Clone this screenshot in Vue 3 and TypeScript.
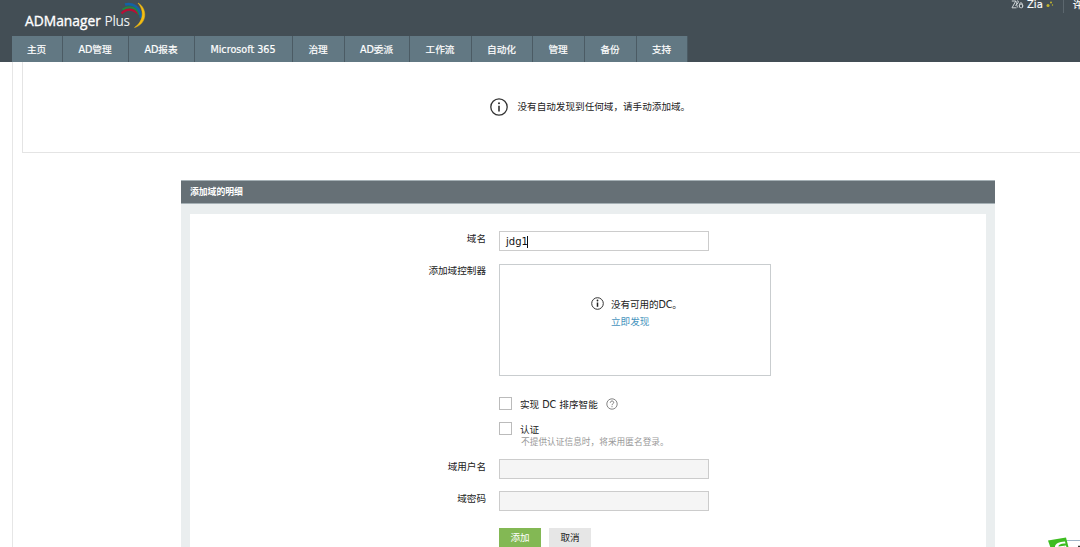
<script setup lang="ts">
interface NavItem {
  label: string
  width: number
}

const navItems: NavItem[] = [
  { label: '主页', width: 51 },
  { label: 'AD管理', width: 66 },
  { label: 'AD报表', width: 66 },
  { label: 'Microsoft 365', width: 98 },
  { label: '治理', width: 52 },
  { label: 'AD委派', width: 65 },
  { label: '工作流', width: 62 },
  { label: '自动化', width: 61 },
  { label: '管理', width: 52 },
  { label: '备份', width: 52 },
  { label: '支持', width: 51 },
]
</script>

<template>
  <div class="page">
    <header class="header">
      <div class="brand">
        <span class="brand-name">ADManager</span>
        <span class="brand-plus">Plus</span>
        <svg class="brand-arcs" width="28" height="28" viewBox="0 0 28 28" fill="none">
          <path d="M2.500 12.500Q10 4.500 19 12.500" stroke="#b80f36" stroke-width="2.200" />
          <path d="M3.500 8.500C11 4 18 6.500 20.500 14" stroke="#23863f" stroke-width="2" />
          <path d="M6 3.600C14 1.500 21.500 6.500 22 17" stroke="#1462a5" stroke-width="2.600" />
          <path d="M19 2C28.500 7 28.500 23 15.500 26.500C24 21 26 10 19 2Z" fill="#f4bd12" stroke="#f4bd12" stroke-width=".5" />
        </svg>
      </div>
      <div class="tools">
        <svg class="zia-icon" width="13" height="10" viewBox="0 0 13 10" fill="none" stroke="#cfd5d8" stroke-width="1">
          <path d="M.8 1h4L1 7.800h4.500M4.300 5.500C7 4 8 1.500 7 .8S4.500 3.800 6.800 7.500M8.500 7.500C8 5 9 2.500 10 2.500s2 3 1.500 5M8.300 5.500c0 3 3.500 3 3.500.5S9 4 8.300 5.500" />
        </svg>
        <span class="zia">Zia</span>
        <svg class="spark" width="8" height="8" viewBox="0 0 8 8" fill="#c3b52d">
          <circle cx="2" cy="4.500" r="1.500" /><circle cx="5" cy="1.500" r="1" /><circle cx="6.500" cy="4" r=".7" />
        </svg>
        <span class="tool-divider"></span>
        <span class="license">许</span>
      </div>
      <nav class="nav">
        <a v-for="item in navItems" :key="item.label" class="nav-item" :style="{ width: item.width + 'px' }">{{ item.label }}</a>
      </nav>
    </header>

    <main class="main">
      <section class="notice">
        <svg class="notice-icon" width="18" height="18" viewBox="0 0 18 18">
          <circle cx="9" cy="9" r="8.200" fill="none" stroke="#333" stroke-width="1.300" />
          <path d="M9 7.800v5.700" stroke="#222" stroke-width="1.500" /><circle cx="9" cy="5.200" r=".95" fill="#222" />
        </svg>
        <span>没有自动发现到任何域，请手动添加域。</span>
      </section>

      <section class="panel">
        <h2 class="panel-title">添加域的明细</h2>
        <div class="panel-body">
          <form class="form" @submit.prevent>
            <div class="row row-name">
              <label class="label">域名</label>
              <div class="field"><span class="typed">jdg1</span><span class="caret"></span></div>
            </div>
            <div class="row row-dc">
              <label class="label">添加域控制器</label>
              <div class="dc-box">
                <svg class="dc-icon" width="13" height="13" viewBox="0 0 13 13">
                  <circle cx="6.500" cy="6.500" r="5.800" fill="none" stroke="#333" stroke-width="1" />
                  <path d="M6.500 5.500v4.300" stroke="#222" stroke-width="1.500" /><circle cx="6.500" cy="3.500" r=".9" fill="#222" />
                </svg>
                <div class="dc-text">
                  <div class="dc-empty">没有可用的DC。</div>
                  <a class="link">立即发现</a>
                </div>
              </div>
            </div>
            <div class="check-row check-sort">
              <span class="checkbox"></span>
              <span class="check-label">实现 DC 排序智能</span>
              <svg class="help" width="12" height="12" viewBox="0 0 12 12" fill="none" stroke="#777">
                <circle cx="6" cy="6" r="5.200" stroke-width=".9" />
                <path d="M4.300 4.700C4.300 2.500 7.700 2.500 7.700 4.500C7.700 5.800 6 5.800 6 7.200M6 8.200v1" stroke-width="1" />
              </svg>
            </div>
            <div class="check-row check-auth">
              <span class="checkbox"></span>
              <div class="check-label">
                <div>认证</div>
                <div class="hint">不提供认证信息时，将采用匿名登录。</div>
              </div>
            </div>
            <div class="row row-user">
              <label class="label">域用户名</label>
              <div class="field disabled"></div>
            </div>
            <div class="row row-password">
              <label class="label">域密码</label>
              <div class="field disabled"></div>
            </div>
            <div class="actions">
              <button class="button primary">添加</button>
              <button class="button">取消</button>
            </div>
          </form>
        </div>
      </section>
    </main>

    <div class="ime">
      <svg width="34" height="12" viewBox="0 0 34 12">
        <path d="M20 3.500H34V12H20Z" fill="#fff" />
        <path d="M19 3.500H34" stroke="#9fb4c8" stroke-width="1" />
        <path d="M1 3.500L19 .5L22 12H4Z" fill="#3dbd20" />
        <path d="M8 12C7 7 11 5 18 4.500L18.500 6.500C14 6 11 8 11.500 9.500L19 8.500L20 12Z" fill="#fff" />
        <path d="M12 12L13 10.500L18 9.800L19 12Z" fill="#3dbd20" />
        <path d="M31 9.500h3" stroke="#333" stroke-width="1.500" />
      </svg>
    </div>
  </div>
</template>

<style>
html,
body {
  margin: 0;
  overflow: hidden;
}
</style>

<style scoped>
.page {
  position: relative;
  width: 1080px;
  height: 547px;
  overflow: hidden;
  background: #fff;
  color: #222;
  font: 9.6px/14px "DejaVu Sans", "Noto Sans CJK SC", sans-serif;
}
.header {
  position: relative;
  box-sizing: border-box;
  height: 62px;
  padding: 36px 0 0 11.5px;
  background: #434e55;
}
.brand {
  position: absolute;
  left: 25px;
  top: 10px;
  display: flex;
  height: 20px;
  color: #fff;
  font: 13.8px/21px "Open Sans", sans-serif;
  white-space: nowrap;
}
.brand-name {
  width: 79.5px;
  -webkit-text-stroke: 0.35px #fff;
}
.brand-plus {
  font-weight: 400;
  font-size: 13.6px;
  letter-spacing: -0.3px;
  color: #eef0f1;
}
.brand-arcs {
  position: absolute;
  left: 94px;
  top: -9px;
}
.tools {
  position: absolute;
  left: 1011px;
  top: -3px;
  width: 69px;
  height: 16px;
  display: flex;
  align-items: center;
  overflow: hidden;
  color: #fff;
}
.zia-icon {
  flex: none;
  margin-right: 3px;
}
.zia {
  width: 16px;
  font-size: 10px;
  -webkit-text-stroke: 0.15px #fff;
}
.spark {
  flex: none;
  margin: 0 0 0 3px;
}
.tool-divider {
  flex: none;
  width: 1px;
  height: 16px;
  margin-left: 9px;
  background: #5c676e;
}
.license {
  flex: none;
  margin-left: 9px;
  font-weight: 500;
}
.nav {
  display: flex;
  height: 26px;
}
.nav-item {
  box-sizing: border-box;
  flex: none;
  border-right: 1px solid #4b5b64;
  background: #627883;
  color: #fff;
  font-size: 9.65px;
  text-align: center;
  line-height: 28px;
  white-space: nowrap;
  -webkit-text-stroke: 0.2px #fff;
}
.main {
  box-sizing: border-box;
  height: 485px;
  margin-left: 12px;
  padding-left: 9px;
  border-left: 1px solid #e6e6e6;
}
.notice {
  box-sizing: border-box;
  display: flex;
  height: 91px;
  padding: 36px 0 0 467px;
  border-left: 1px solid #e4e4e4;
  border-bottom: 1px solid #e4e4e4;
}
.notice span {
  margin: 2px 0 0 9.5px;
}
.panel {
  width: 814px;
  margin: 27px 0 0 159px;
}
.panel-title {
  box-sizing: border-box;
  height: 24px;
  margin: 0;
  padding-left: 9px;
  border: solid #a5b0b5;
  border-width: 1px 0;
  background: #667076;
  color: #fff;
  font-size: 8.8px;
  line-height: 23px;
}
.panel-body {
  height: 343px;
  padding: 10px 9px 0 9px;
  background: #eaeeef;
}
.form {
  box-sizing: border-box;
  height: 343px;
  padding-top: 17px;
  background: #fff;
}
.row {
  display: grid;
  grid-template-columns: 296px auto;
  column-gap: 13px;
  align-items: start;
  justify-content: start;
}
.label {
  padding-top: 1px;
  text-align: right;
}
.row-dc .label {
  padding-top: 0;
}
.field {
  box-sizing: border-box;
  display: flex;
  align-items: center;
  width: 210px;
  height: 20px;
  padding: 1px 0 0 6px;
  border: 1px solid #ccc;
}
.disabled {
  background: #f5f5f5;
}
.typed {
  font-size: 10px;
  color: #111;
}
.caret {
  width: 1px;
  height: 12px;
  margin-left: -1px;
  background: #111;
}
.row-dc {
  margin-top: 13px;
}
.dc-box {
  box-sizing: border-box;
  display: flex;
  width: 272px;
  height: 112px;
  padding: 32px 0 0 91px;
  border: 1px solid #c9cdcf;
}
.dc-text {
  margin: -1px 0 0 7px;
  line-height: 17px;
}
.dc-empty {
  letter-spacing: -0.1px;
}
.link {
  color: #4794bd;
}
.check-row {
  display: flex;
  padding-left: 309px;
}
.checkbox {
  box-sizing: border-box;
  flex: none;
  width: 13px;
  height: 13px;
  margin-right: 8px;
  border: 1px solid #bbb;
}
.check-label {
  padding-top: 1px;
}
.check-sort {
  margin-top: 21px;
  height: 25px;
}
.help {
  margin: 1px 0 0 8px;
}
.check-auth {
  height: 37px;
}
.hint {
  margin: -1px 0 0 1px;
  color: #999;
  font-size: 8.7px;
  line-height: 12px;
}
.row-password {
  margin-top: 12px;
}
.actions {
  display: flex;
  gap: 8px;
  margin-top: 17px;
  padding-left: 309px;
}
.button {
  width: 42px;
  height: 20px;
  padding: 0;
  border: 0;
  background: #e6e6e6;
  color: #222;
  font: inherit;
}
.primary {
  background: #83b854;
  color: #fff;
}
.ime {
  position: absolute;
  left: 1047px;
  top: 537px;
  width: 33px;
  height: 10px;
  overflow: hidden;
}
.ime svg {
  display: block;
}
</style>
